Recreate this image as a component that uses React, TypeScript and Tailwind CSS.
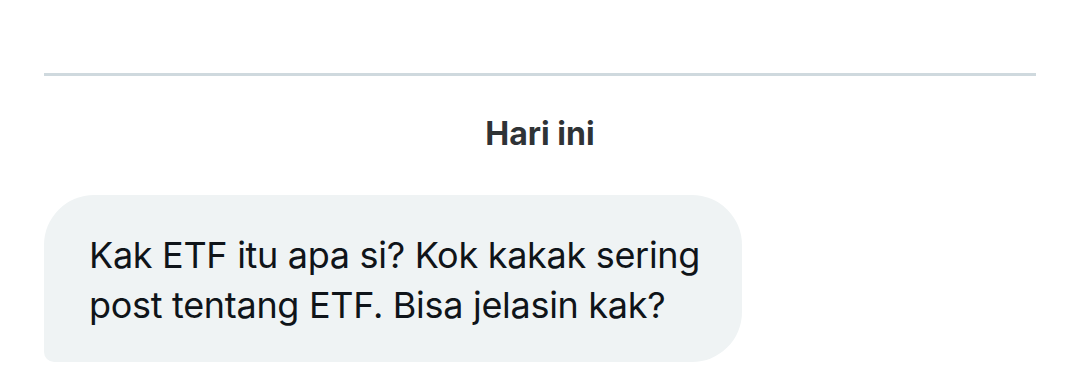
export default function App() {
  return (
    <div
      className="w-[1080px] h-[377px] bg-white px-[44px] pt-[73px] overflow-hidden"
      style={{ fontFamily: "Inter, 'Noto Sans', sans-serif" }}
    >
      <div className="h-[3px] bg-[#cfd9de]" />
      <div className="mt-[38px] flex justify-center">
        <span className="text-[32px] leading-[40px] font-bold text-[#2f3336]">Hari ini</span>
      </div>
      <div className="mt-[41px] flex">
        <div className="w-[698px] h-[167px] bg-[#eff3f4] rounded-[50px] rounded-bl-[10px] pl-[45px] pr-[30px] pt-[35px] text-[36px] leading-[50px] text-[#0f1419] tracking-[-0.3px]">
          Kak ETF itu apa si? Kok kakak sering
          <br />
          post tentang ETF. Bisa jelasin kak?
        </div>
      </div>
    </div>
  )
}
